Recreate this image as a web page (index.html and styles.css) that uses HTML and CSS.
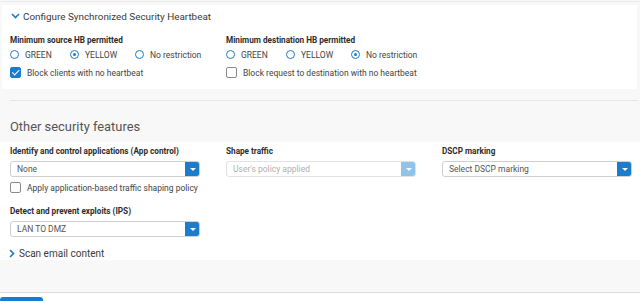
FILE: index.html
```html
<!DOCTYPE html>
<html lang="en">
<head>
    <meta charset="UTF-8">
    <title>Policy settings</title>
    <link rel="stylesheet" href="styles.css">
</head>
<body>
    <div class="topline"></div>

    <div class="panel panel-hb">
        <div class="toggle">
            <svg class="chev" width="9" height="6" viewBox="0 0 9 6"><path d="M1 1l3.5 3.5L8 1" fill="none" stroke="#1b7bcd" stroke-width="1.6"/></svg>
            <span>Configure Synchronized Security Heartbeat</span>
        </div>
        <div class="cols">
            <div class="col">
                <div class="label">Minimum source HB permitted</div>
                <div class="radios">
                    <span class="radio"><i class="dot"></i>GREEN</span>
                    <span class="radio r2"><i class="dot on"></i>YELLOW</span>
                    <span class="radio r3"><i class="dot"></i>No restriction</span>
                </div>
                <div class="check"><i class="box on"></i>Block clients with no heartbeat</div>
            </div>
            <div class="col">
                <div class="label">Minimum destination HB permitted</div>
                <div class="radios">
                    <span class="radio"><i class="dot"></i>GREEN</span>
                    <span class="radio r2"><i class="dot"></i>YELLOW</span>
                    <span class="radio r3"><i class="dot on"></i>No restriction</span>
                </div>
                <div class="check"><i class="box"></i>Block request to destination with no heartbeat</div>
            </div>
        </div>
    </div>

    <div class="gap">
        <div class="rule"></div>
        <h2>Other security features</h2>
    </div>

    <div class="panel panel-other">
        <div class="cols">
            <div class="col">
                <div class="label">Identify and control applications (App control)</div>
                <div class="select"><span>None</span><b class="arrow"></b></div>
            </div>
            <div class="col">
                <div class="label">Shape traffic</div>
                <div class="select disabled"><span>User's policy applied</span><b class="arrow"></b></div>
            </div>
            <div class="col">
                <div class="label">DSCP marking</div>
                <div class="select"><span>Select DSCP marking</span><b class="arrow"></b></div>
            </div>
        </div>
        <div class="check check-plain"><i class="box"></i>Apply application-based traffic shaping policy</div>
        <div class="label label-ips">Detect and prevent exploits (IPS)</div>
        <div class="select"><span>LAN TO DMZ</span><b class="arrow"></b></div>
        <div class="toggle toggle-scan">
            <svg class="chev" width="6" height="9" viewBox="0 0 6 9"><path d="M1 1l3.5 3.5L1 8" fill="none" stroke="#1b7bcd" stroke-width="1.6"/></svg>
            <span>Scan email content</span>
        </div>
    </div>

    <div class="footer-gap"></div>
    <div class="footer">
        <div class="save"></div>
    </div>
</body>
</html>
```

FILE: styles.css
```css
body {
    margin: 0;
    background: #f8f8f8;
    font-family: Roboto, "Liberation Sans", sans-serif;
    color: #333;
    font-size: 8.5px;
    overflow: hidden;
}
.topline {
    height: 1px;
    margin-top: 1px;
    background: #ececec;
}
.panel {
    background: #fff;
}
.panel-hb {
    margin: 3px 3px 0 2px;
    height: 84px;
    padding: 0 8px;
}
.toggle {
    display: flex;
    align-items: center;
    height: 22px;
    font-size: 9.9px;
    color: #3a3a3a;
}
.chev {
    flex-shrink: 0;
    margin: 0 3px 0 1px;
}
.cols {
    display: flex;
}
.col {
    width: 216px;
    flex-shrink: 0;
}
.label {
    font-weight: 700;
    font-size: 8.2px;
    color: #2d2d2d;
    white-space: nowrap;
}
.panel-hb .label {
    margin-top: 8px;
    height: 11px;
    line-height: 11px;
}
.radios {
    display: flex;
    height: 17px;
    align-items: center;
}
.radio {
    display: flex;
    align-items: center;
    width: 60px;
    color: #444;
    white-space: nowrap;
}
.radio.r2 {
    width: 65px;
}
.radio.r3 {
    width: auto;
}
.dot {
    flex-shrink: 0;
    width: 7px;
    height: 7px;
    border: 1.6px solid #1b7bcd;
    border-radius: 50%;
    margin-right: 6px;
    position: relative;
}
.dot.on::after {
    content: "";
    position: absolute;
    left: 2px;
    top: 2px;
    width: 3px;
    height: 3px;
    border-radius: 50%;
    background: #1b7bcd;
}
.check {
    display: flex;
    align-items: center;
    height: 19px;
    color: #444;
}
.box {
    flex-shrink: 0;
    width: 9px;
    height: 9px;
    border: 1px solid #8a8a8a;
    border-radius: 2px;
    margin-right: 6px;
    position: relative;
}
.box.on {
    background: #1b7bcd;
    border-color: #1b7bcd;
}
.box.on::after {
    content: "";
    position: absolute;
    left: 3px;
    top: 0px;
    width: 2.5px;
    height: 5.5px;
    border: solid #fff;
    border-width: 0 1.6px 1.6px 0;
    transform: rotate(45deg);
}
.gap {
    height: 53px;
    padding-top: 11px;
    box-sizing: border-box;
}
.rule {
    height: 1px;
    background: #e6e6e6;
    margin: 0 2px 0 10px;
}
h2 {
    margin: 19px 0 0 10px;
    font-size: 12.9px;
    font-weight: 400;
    color: #555;
    line-height: 14px;
}
.panel-other {
    height: 118px;
    padding: 0 10px;
    box-sizing: border-box;
}
.panel-other .label {
    height: 19px;
    line-height: 19px;
}
.select {
    width: 190px;
    height: 16px;
    box-sizing: border-box;
    border: 1px solid #cfcfcf;
    border-radius: 3px;
    display: flex;
    align-items: center;
    justify-content: space-between;
    color: #555;
    font-size: 8.5px;
    overflow: hidden;
}
.select span {
    padding-left: 6px;
}
.arrow {
    width: 15px;
    height: 16px;
    background: #1b7bcd;
    display: flex;
    align-items: center;
    justify-content: center;
    margin-right: -1px;
}
.arrow::after {
    content: "";
    border: solid transparent;
    border-width: 3px 3px 0 3px;
    border-top-color: #fff;
}
.select.disabled {
    color: #b0b0b0;
    border-color: #e2e2e2;
}
.select.disabled .arrow {
    background: #8fc3ea;
}
.check-plain {
    height: 21px;
}
.label.label-ips {
    margin-top: 4px;
}
.toggle-scan {
    margin-top: 6px;
    height: 20px;
    font-size: 10px;
}
.toggle-scan .chev {
    margin: 0 4px 0 -1px;
}
.footer-gap {
    height: 32px;
    border-bottom: 1px solid #dcdcdc;
}
.footer {
    background: #fff;
    height: 10px;
    padding-top: 4px;
}
.save {
    width: 43px;
    height: 10px;
    background: #1b7bcd;
    border-radius: 3px 3px 0 0;
}
```
